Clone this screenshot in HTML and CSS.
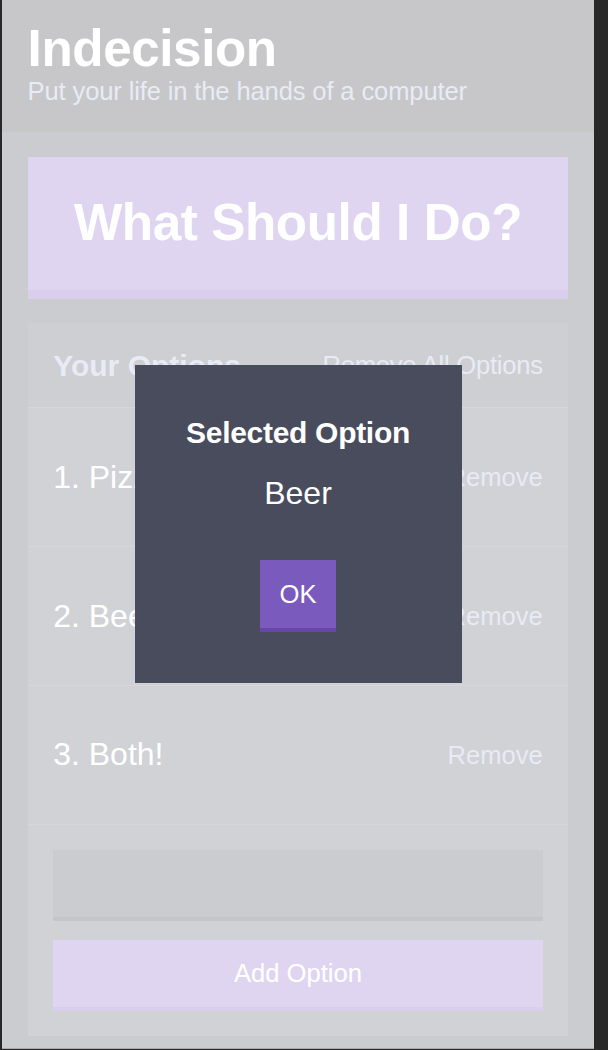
FILE: index.html
```html
<!DOCTYPE html>
<html lang="en">
<head>
<meta charset="utf-8">
<title>Indecision</title>
<link rel="stylesheet" href="styles.css">
</head>
<body>
<div class="frame">
  <header class="header">
    <div class="container">
      <h1 class="header__title">Indecision</h1>
      <h2 class="header__subtitle">Put your life in the hands of a computer</h2>
    </div>
  </header>
  <main class="container">
    <button class="big-button">What Should I Do?</button>
    <div class="widget">
      <div class="widget-header">
        <h3 class="widget-header__title">Your Options</h3>
        <button class="button--link link-all">Remove All Options</button>
      </div>
      <div class="option">
        <p class="option__text">1. Pizza</p>
        <button class="button--link">Remove</button>
      </div>
      <div class="option">
        <p class="option__text">2. Beer</p>
        <button class="button--link">Remove</button>
      </div>
      <div class="option">
        <p class="option__text">3. Both!</p>
        <button class="button--link">Remove</button>
      </div>
      <form class="add-option">
        <input class="add-option__input" type="text" name="option">
        <button class="button" type="button">Add Option</button>
      </form>
    </div>
  </main>
  <div class="overlay">
    <div class="modal">
      <h3 class="modal__title">Selected Option</h3>
      <p class="modal__body">Beer</p>
      <button class="button modal__button">OK</button>
    </div>
  </div>
</div>
</body>
</html>
```

FILE: styles.css
```css
* {
  box-sizing: border-box;
}

html,
body {
  margin: 0;
}

body {
  background: #282828;
  font-family: "Liberation Sans", Arial, Helvetica, sans-serif;
  color: #ffffff;
  height: 1050px;
  overflow: hidden;
}

.frame {
  position: relative;
  width: 592px;
  height: 1049px;
  margin-left: 2px;
  background: #333745;
  overflow: hidden;
  border-bottom: 1px solid #a9aaac;
}

.container {
  padding: 0 25.6px;
}

.header {
  background: #20222b;
  padding: 24px 0;
  margin-bottom: 25px;
}

.header__title {
  margin: 0;
  font-size: 51.2px;
  line-height: 50px;
  font-weight: bold;
  letter-spacing: -0.4px;
}

.header__subtitle {
  margin: 0;
  font-size: 25.6px;
  line-height: 34px;
  font-weight: normal;
  color: #a5afd7;
  letter-spacing: -0.15px;
}

.big-button {
  display: block;
  width: 100%;
  margin: 0 0 24px;
  padding: 38.4px 20px;
  background: #8357c5;
  border: none;
  border-bottom: 9.6px solid #6a3fae;
  color: #ffffff;
  font-family: inherit;
  font-weight: bold;
  font-size: 51.2px;
  line-height: 1.1;
  letter-spacing: -0.4px;
}

.widget {
  background: #464b5e;
}

.widget-header {
  display: flex;
  justify-content: space-between;
  align-items: center;
  padding: 25.6px;
  background: #3c4251;
  color: #a5afd7;
  border-bottom: 1px solid #5c6279;
}

.widget-header__title {
  margin: 0;
  font-size: 30px;
  line-height: 33px;
  font-weight: bold;
}

.button--link {
  background: none;
  border: none;
  padding: 0;
  color: #a5afd7;
  font-family: inherit;
  font-size: 25.6px;
  line-height: 1.1;
  letter-spacing: 0;
}

.link-all {
  letter-spacing: -0.25px;
}

.option {
  display: flex;
  justify-content: space-between;
  align-items: center;
  padding: 50.5px 25.6px;
  border-bottom: 1px solid #5c6279;
}

.option__text {
  margin: 0;
  font-size: 32px;
  line-height: 36.8px;
  color: #ffffff;
}

.add-option {
  display: flex;
  flex-direction: column;
  margin: 0;
  padding: 25.6px;
}

.add-option__input {
  height: 71px;
  margin: 0 0 19px;
  padding: 19.2px;
  background: #333745;
  border: none;
  border-bottom: 4.8px solid #1d1f27;
  color: #a5afd7;
  font-family: inherit;
  font-size: 25.6px;
  outline: none;
}

.button {
  padding: 19.2px;
  background: #8357c5;
  border: none;
  border-bottom: 4.8px solid #6a3fae;
  color: #ffffff;
  font-family: inherit;
  font-size: 25.6px;
  line-height: 1.1;
}

.overlay {
  position: absolute;
  inset: 0;
  display: flex;
  align-items: center;
  justify-content: center;
  background: rgba(255, 255, 255, 0.75);
}

.modal {
  width: 327px;
  padding: 51.2px;
  background: #484c5d;
  color: #ffffff;
  text-align: center;
}

.modal__title {
  margin: 0 0 25.6px;
  font-size: 30px;
  line-height: 34.5px;
  font-weight: bold;
  letter-spacing: -0.3px;
}

.modal__body {
  margin: 0 0 50px;
  font-size: 32px;
  line-height: 34px;
  font-weight: 300;
}

.modal__button {
  display: block;
  margin: 0 auto;
  padding: 19.6px 19.2px;
  background: #7b5abd;
  border-bottom-color: #6746a8;
}
```
